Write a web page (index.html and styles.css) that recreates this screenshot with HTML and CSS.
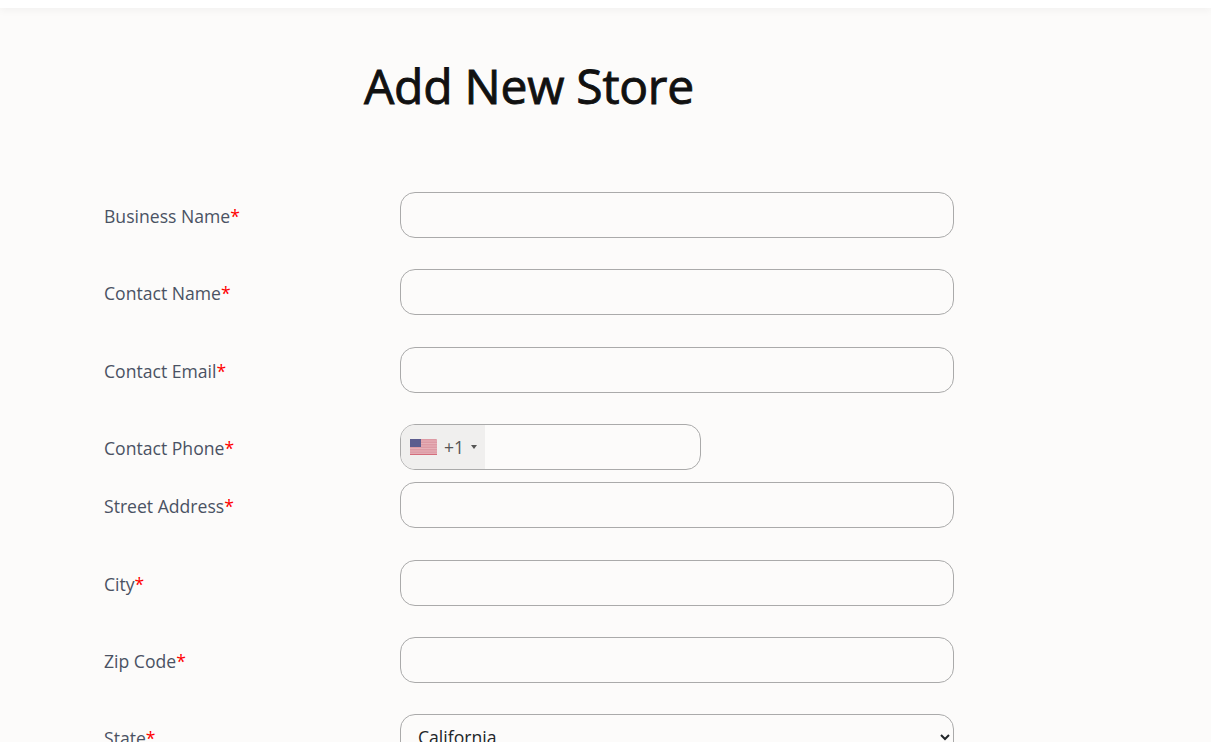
FILE: index.html
```html
<!DOCTYPE html>
<html lang="en">
<head>
    <meta charset="UTF-8">
    <meta name="viewport" content="width=device-width, initial-scale=1.0">
    <title>Add New Store</title>
    <link rel="stylesheet" href="styles.css">
</head>
<body>

<div class="topbar"></div>

<div class="page">
    <h1 class="page-title">Add New Store</h1>

    <form class="store-form">
        <div class="form-row">
            <label class="form-label">Business Name<span class="req">*</span></label>
            <input class="form-input" type="text">
        </div>
        <div class="form-row">
            <label class="form-label">Contact Name<span class="req">*</span></label>
            <input class="form-input" type="text">
        </div>
        <div class="form-row">
            <label class="form-label">Contact Email<span class="req">*</span></label>
            <input class="form-input" type="text">
        </div>
        <div class="form-row form-row-phone">
            <label class="form-label">Contact Phone<span class="req">*</span></label>
            <div class="phone">
                <div class="phone-code">
                    <svg class="flag" viewBox="0 0 27 16" width="27" height="16">
                        <rect width="27" height="16" rx="1" fill="#dd9aa4"/>
                        <path d="M0 2h27M0 4.5h27M0 7h27M0 9.5h27M0 12h27M0 14.3h27" stroke="#e6b0b7" stroke-width="1"/>
                        <path d="M0 15.5h27" stroke="#d46d7c" stroke-width="1"/>
                        <rect width="11" height="8" fill="#5c5c8e"/>
                    </svg>
                    <span class="dial">+1</span>
                    <span class="caret"></span>
                </div>
                <input class="phone-input" type="text">
            </div>
        </div>
        <div class="form-row">
            <label class="form-label">Street Address<span class="req">*</span></label>
            <input class="form-input" type="text">
        </div>
        <div class="form-row">
            <label class="form-label">City<span class="req">*</span></label>
            <input class="form-input" type="text">
        </div>
        <div class="form-row">
            <label class="form-label">Zip Code<span class="req">*</span></label>
            <input class="form-input" type="text">
        </div>
        <div class="form-row">
            <label class="form-label">State<span class="req">*</span></label>
            <select class="form-input form-select">
                <option>California</option>
            </select>
        </div>
    </form>
</div>

</body>
</html>
```

FILE: styles.css
```css
html, body {
    height: 742px;
    overflow: hidden;
}
body {
    font-family: "Open Sans", "Liberation Sans", sans-serif;
    margin: 0;
    padding: 0;
    background-color: #fcfbfa;
}
.topbar {
    height: 8px;
    background-color: #fff;
    box-shadow: 0 2px 8px rgba(0, 0, 0, 0.05);
}
.page {
    padding-left: 104px;
}
.page-title {
    margin: 0 0 72.8px 260px;
    padding-top: 45px;
    font-size: 48px;
    font-weight: 400;
    line-height: 66px;
    letter-spacing: -0.25px;
    color: #111;
    -webkit-text-stroke: 0.9px #111;
}
.form-row {
    display: flex;
    align-items: center;
    margin-bottom: 31.4px;
}
.form-row-phone {
    margin-bottom: 12.2px;
}
.form-label {
    width: 296px;
    padding-top: 2px;
    font-size: 17.6px;
    line-height: 24px;
    color: #4a5263;
}
.req {
    color: #f00;
}
.form-input {
    box-sizing: border-box;
    width: 554px;
    height: 46px;
    padding: 0 18px;
    border: 1px solid #aaa;
    border-radius: 15px;
    background-color: transparent;
    font-family: inherit;
    font-size: 17.6px;
    color: #212529;
}
.form-select {
    padding-left: 13px;
}
.phone {
    box-sizing: border-box;
    display: flex;
    width: 301px;
    height: 46px;
    border: 1px solid #aaa;
    border-radius: 15px;
    overflow: hidden;
}
.phone-code {
    display: flex;
    align-items: center;
    width: 84px;
    padding-left: 9px;
    box-sizing: border-box;
    background-color: #f0efee;
}
.flag {
    display: block;
}
.dial {
    margin-left: 7px;
    font-size: 17.6px;
    line-height: 24px;
    color: #555;
}
.caret {
    margin-left: 7px;
    border-top: 4px solid #555;
    border-left: 3px solid transparent;
    border-right: 3px solid transparent;
}
.phone-input {
    flex: 1;
    min-width: 0;
    border: 0;
    background: transparent;
}
```
